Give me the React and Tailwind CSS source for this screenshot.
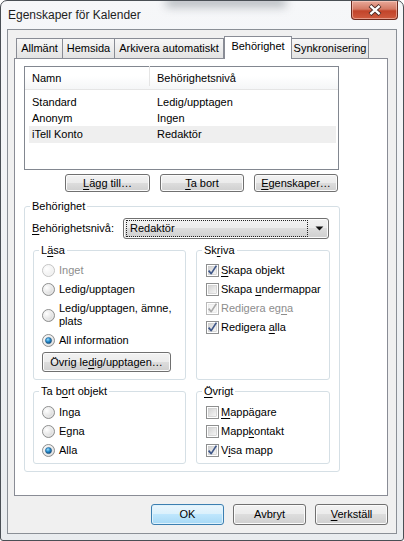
import React from "react";

const U = ({ children }) => <span className="underline underline-offset-[1.5px] decoration-1">{children}</span>;

function Radio({ checked, disabled }) {
  return (
    <svg width="13" height="13" viewBox="0 0 13 13" className="shrink-0">
      <defs>
        <radialGradient id="rgN" cx="35%" cy="35%" r="70%">
          <stop offset="0" stopColor="#ffffff" />
          <stop offset="0.6" stopColor="#e6e6e6" />
          <stop offset="1" stopColor="#c9c9c9" />
        </radialGradient>
        <radialGradient id="rgD" cx="35%" cy="35%" r="70%">
          <stop offset="0" stopColor="#ffffff" />
          <stop offset="1" stopColor="#ececec" />
        </radialGradient>
        <radialGradient id="rgDot" cx="40%" cy="35%" r="65%">
          <stop offset="0" stopColor="#9fe0ff" />
          <stop offset="0.5" stopColor="#2a90d0" />
          <stop offset="1" stopColor="#0d4f86" />
        </radialGradient>
      </defs>
      <circle cx="6.5" cy="6.5" r="6" fill={disabled ? "url(#rgD)" : "url(#rgN)"} stroke={disabled ? "#c4c4c4" : "#8e8f8f"} />
      <circle cx="6.5" cy="6.5" r="4.6" fill="none" stroke={disabled ? "#f6f6f6" : "#f4f4f4"} strokeWidth="0.8" />
      {checked && <circle cx="6.5" cy="6.5" r="3.1" fill="url(#rgDot)" stroke="#1a4f7a" strokeWidth="0.5" />}
    </svg>
  );
}

function Check({ checked, disabled }) {
  return (
    <svg width="13" height="13" viewBox="0 0 13 13" className="shrink-0">
      <defs>
        <linearGradient id="cbN" x1="0" y1="0" x2="1" y2="1">
          <stop offset="0" stopColor="#d2d2d2" />
          <stop offset="1" stopColor="#f7f7f7" />
        </linearGradient>
      </defs>
      <rect x="0.5" y="0.5" width="12" height="12" fill="#fff" stroke={disabled ? "#b9b9b9" : "#8e8f8f"} />
      <rect x="2.5" y="2.5" width="8" height="8" fill={disabled ? "#f4f4f4" : "url(#cbN)"} stroke={disabled ? "#e2e2e2" : "#c4c4c4"} strokeWidth="0.6" />
      {checked && (
        <path d="M2.6 6.6 L5.2 9.6 L10.4 1.6" fill="none" stroke={disabled ? "#a9a9a9" : "#3f5789"} strokeWidth="1.7" strokeLinejoin="round" />
      )}
    </svg>
  );
}

function Btn({ children, className = "", def }) {
  return (
    <div
      className={
        "flex items-center justify-center rounded-[3px] border " +
        (def
          ? "border-[#3c7fb1] bg-[linear-gradient(#eaf6fd_0%,#d9f0fc_50%,#bee6fd_50%,#a7d9f5_100%)] shadow-[inset_0_0_0_1px_#dff2fc]"
          : "border-[#707070] bg-[linear-gradient(#f2f2f2_0%,#ebebeb_50%,#dddddd_50%,#cfcfcf_100%)] shadow-[inset_0_0_0_1px_#fbfbfb]") +
        " " +
        className
      }
    >
      {children}
    </div>
  );
}

function Group({ label, className = "", inner = "", children }) {
  return (
    <fieldset className={"border border-[#d5dfe5] rounded-[3px] " + className}>
      <legend className="ml-[5px] px-[2px] leading-[13px]">{label}</legend>
      <div className={inner}>{children}</div>
    </fieldset>
  );
}

function RadioRow({ label, checked, disabled }) {
  return (
    <div className={"flex items-center h-[19px] gap-[4px] " + (disabled ? "text-[#8d8d8d]" : "")}>
      <Radio checked={checked} disabled={disabled} />
      <span>{label}</span>
    </div>
  );
}

function CheckRow({ label, checked, disabled }) {
  return (
    <div className={"flex items-center h-[19px] gap-[2px] " + (disabled ? "text-[#8d8d8d]" : "")}>
      <Check checked={checked} disabled={disabled} />
      <span>{label}</span>
    </div>
  );
}

export default function App() {
  return (
    <div className="w-[404px] h-[541px] bg-white font-['Liberation_Sans',Arial,sans-serif] text-[11px] text-black leading-[13px]">
      <div className="relative w-[404px] h-[541px] border border-[#4a4f55] rounded-t-[7px] rounded-b-[3px] bg-[linear-gradient(#f6f7f9,#e9ecef)] flex flex-col overflow-hidden">
        {/* blurred background smudge seen through glass */}
        <div className="absolute left-[165px] top-[-4px] w-[120px] h-[10px] bg-[#9aa0a6] blur-[5px] opacity-70" />
        {/* Title bar */}
        <div className="relative h-[28px] flex items-center pl-[7px]">
          <span className="text-[12px] text-[#1e1e1e]">Egenskaper för Kalender</span>
          <div className="absolute right-[5px] top-0 w-[47px] h-[19px] rounded-b-[4px] border border-t-0 border-[#6b2a1e] bg-[linear-gradient(#e9a999_0%,#d47a65_45%,#c2442a_55%,#cf5b3f_100%)] shadow-[inset_0_0_0_1px_rgba(255,220,210,0.5)] flex items-center justify-center">
            <svg width="16" height="12" viewBox="0 0 16 12">
              <path d="M3 1.5 L13 10.5 M13 1.5 L3 10.5" stroke="#4a2a24" strokeWidth="4.2" strokeLinecap="butt" />
              <path d="M3.4 1.9 L12.6 10.1 M12.6 1.9 L3.4 10.1" stroke="#ffffff" strokeWidth="2.4" />
            </svg>
          </div>
        </div>

        {/* Client area */}
        <div className="ml-[6px] w-[390px] h-[505px] border border-[#8a8f96] bg-[#f0f0f0] pl-[6px] pr-[8px] pt-[6px] flex flex-col">
          {/* Tabs */}
          <div className="flex items-end h-[22px] pl-[2px] relative z-10">
            <div className="w-[47px] h-[20px] border border-b-0 border-[#898c95] bg-[linear-gradient(#f7f7f7,#e3e3e3)] flex items-center justify-center">Allmänt</div>
            <div className="w-[52px] h-[20px] border border-b-0 border-l-0 border-[#898c95] bg-[linear-gradient(#f7f7f7,#e3e3e3)] flex items-center justify-center">Hemsida</div>
            <div className="w-[109px] h-[20px] border border-b-0 border-l-0 border-[#898c95] bg-[linear-gradient(#f7f7f7,#e3e3e3)] flex items-center justify-center">Arkivera automatiskt</div>
            <div className="w-[68px] h-[23px] -mb-[1px] border border-b-0 border-[#898c95] bg-white flex items-start pt-[3px] justify-center">Behörighet</div>
            <div className="w-[77px] h-[20px] border border-b-0 border-l-0 border-[#898c95] bg-[linear-gradient(#f7f7f7,#e3e3e3)] flex items-center justify-center">Synkronisering</div>
          </div>

          {/* Panel */}
          <div className="w-[374px] h-[438px] border border-[#898c95] bg-white pl-[9px] pt-[7px] flex flex-col">
            {/* List */}
            <div className="w-[315px] h-[104px] border border-[#828790] bg-white flex flex-col">
              <div className="h-[23px] flex items-end pb-[3px] border-b border-[#e5e5e5] bg-[linear-gradient(#ffffff_40%,#f5f6f7)]">
                <div className="w-[125px] h-[20px] pl-[7px] flex items-end pb-[1px] border-r border-[#e5e5e5]">Namn</div>
                <div className="pl-[7px] pb-[1px]">Behörighetsnivå</div>
              </div>
              <div className="mt-[4px] flex flex-col pl-[4px] pr-[2px]">
                <div className="h-[16px] flex items-center">
                  <div className="w-[128px] pl-[3px]">Standard</div>
                  <div>Ledig/upptagen</div>
                </div>
                <div className="h-[16px] flex items-center">
                  <div className="w-[128px] pl-[3px]">Anonym</div>
                  <div>Ingen</div>
                </div>
                <div className="h-[17px] flex items-center bg-[#efefef]">
                  <div className="w-[128px] pl-[3px]">iTell Konto</div>
                  <div>Redaktör</div>
                </div>
              </div>
            </div>

            {/* Buttons */}
            <div className="w-[315px] flex justify-end gap-[10px] mt-[4px] pr-[1px]">
              <Btn className="w-[85px] h-[18px]"><span><U>L</U>ägg till…</span></Btn>
              <Btn className="w-[84px] h-[18px]"><span><U>T</U>a bort</span></Btn>
              <Btn className="w-[84px] h-[18px]"><span><U>E</U>genskaper…</span></Btn>
            </div>

            {/* Behörighet group */}
            <Group label="Behörighet" className="mt-[8px] w-[315px] h-[272px]" inner="pl-[7px] pr-[9px]">
              <div className="flex items-center mt-[5px] h-[21px]">
                <div className="w-[91px]"><U>B</U>ehörighetsnivå:</div>
                <div className="w-[206px] h-[21px] rounded-[3px] border border-[#707070] bg-[linear-gradient(#f2f2f2_0%,#ebebeb_50%,#dddddd_50%,#cfcfcf_100%)] shadow-[inset_0_0_0_1px_#fbfbfb] flex items-center pl-[2px] pr-[4px]">
                  <div className="w-[185px] h-[17px] border border-dotted border-[#222] flex items-center pl-[3px]">Redaktör</div>
                  <svg width="9" height="5" viewBox="0 0 9 5" className="ml-[7px]">
                    <path d="M0.5 0.5 L8.5 0.5 L4.5 4.5 Z" fill="#111" />
                  </svg>
                </div>
              </div>

              <div className="flex gap-[10px] mt-[5px] pl-[1px]">
                <Group label={<span>L<U>ä</U>sa</span>} className="w-[153px] h-[136px]" inner="pl-[8px] mt-[4px]">
                  <RadioRow label="Inget" disabled />
                  <RadioRow label="Ledig/upptagen" />
                  <div className="flex items-center h-[32px] gap-[4px]">
                    <Radio />
                    <span className="leading-[13px]">Ledig/upptagen, ämne,<br />plats</span>
                  </div>
                  <RadioRow label="All information" checked />
                  <Btn className="mt-[2px] w-[129px] h-[20px]"><span>Övrig le<U>d</U>ig/upptagen…</span></Btn>
                </Group>
                <Group label={<span>Sk<U>r</U>iva</span>} className="w-[134px] h-[136px]" inner="pl-[9px] mt-[4px]">
                  <CheckRow label={<span><U>S</U>kapa objekt</span>} checked />
                  <CheckRow label={<span>Skapa <U>u</U>ndermappar</span>} />
                  <CheckRow label={<span>Redigera eg<U>n</U>a</span>} checked disabled />
                  <CheckRow label={<span>Redigera <U>a</U>lla</span>} checked />
                </Group>
              </div>

              <div className="flex gap-[10px] mt-[5px] pl-[1px]">
                <Group label={<span>Ta b<U>o</U>rt objekt</span>} className="w-[153px] h-[79px]" inner="pl-[8px] mt-[5px]">
                  <RadioRow label="Inga" />
                  <RadioRow label="Egna" />
                  <RadioRow label="Alla" checked />
                </Group>
                <Group label={<span><U>Ö</U>vrigt</span>} className="w-[134px] h-[79px]" inner="pl-[9px] mt-[5px]">
                  <CheckRow label={<span><U>M</U>appägare</span>} />
                  <CheckRow label={<span>Mapp<U>k</U>ontakt</span>} />
                  <CheckRow label={<span>V<U>i</U>sa mapp</span>} checked />
                </Group>
              </div>
            </Group>
          </div>

          {/* Dialog buttons */}
          <div className="flex justify-end gap-[9px] mt-[8px]">
            <Btn def className="w-[73px] h-[21px]">OK</Btn>
            <Btn className="w-[73px] h-[21px]">Avbryt</Btn>
            <Btn className="w-[73px] h-[21px]"><span><U>V</U>erkställ</span></Btn>
          </div>
        </div>
      </div>
    </div>
  );
}
